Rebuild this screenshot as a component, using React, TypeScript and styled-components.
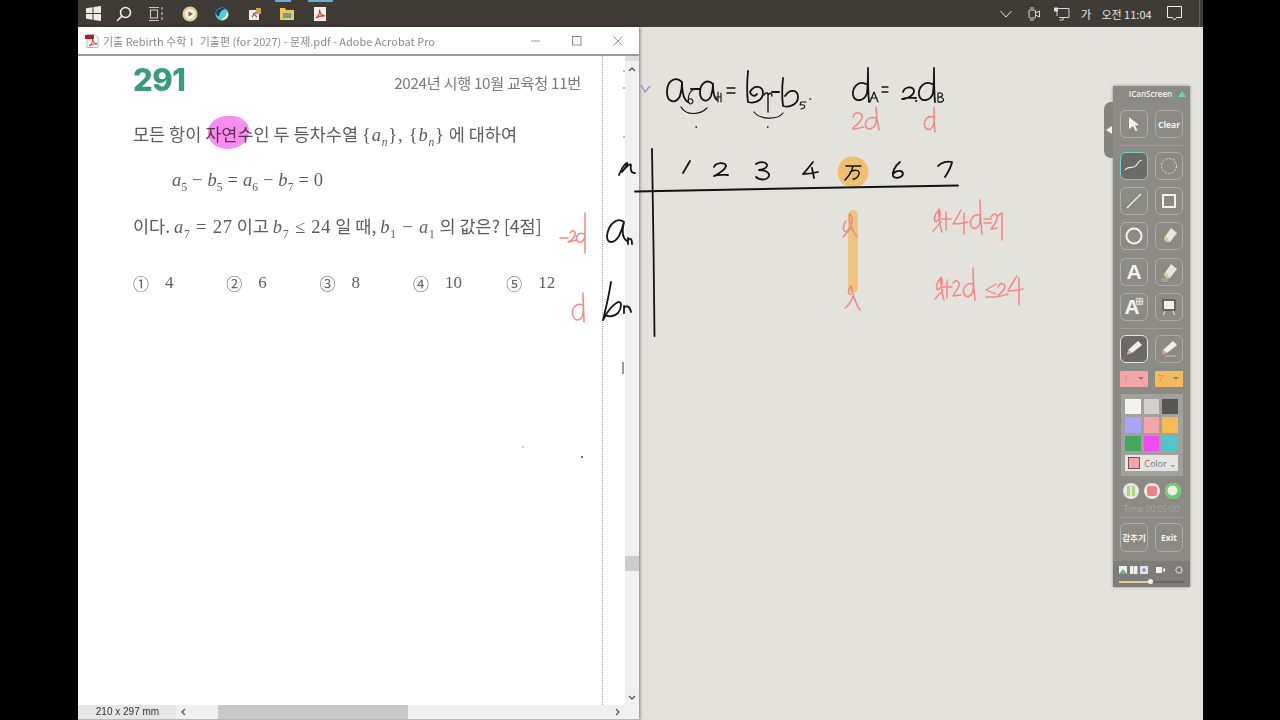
import React from 'react';
import styled, { createGlobalStyle } from 'styled-components';

const Global = createGlobalStyle`
  html, body { margin: 0; padding: 0; background: #000; overflow: hidden; }
  #root { width: 1280px; height: 720px; }
  * { box-sizing: border-box; }
`;

const KR = `"Noto Sans CJK KR", "Noto Sans", sans-serif`;
const SERIF = `"Liberation Serif", "Noto Sans CJK KR", serif`;

const Screen = styled.div`
  position: relative;
  width: 1280px;
  height: 720px;
  background: #000;
  padding: 0 77px 0 78px;
  overflow: hidden;
`;
const Desktop = styled.div`
  position: relative;
  width: 1125px;
  height: 720px;
  display: flex;
  flex-direction: column;
  background: #e4e2dd;
`;
const Taskbar = styled.header`
  position: relative;
  height: 27px;
  flex: none;
  background: #3f3c38;
  display: flex;
  align-items: center;
  color: #e8e6e2;
`;
const TaskSlot = styled.span<{ $w: number; $l?: number; $r?: number }>`
  position: relative;
  width: ${p => p.$w}px;
  height: 27px;
  flex: none;
  display: flex;
  align-items: center;
  justify-content: center;
  ${p => p.$l !== undefined && `&::before { content: ''; position: absolute; top: 0; left: ${p.$l}px; right: ${p.$r}px; height: 2px; background: #6fa9d8; }`}
`;
const TaskSpacer = styled.span`
  flex: 1;
`;
const TrayEdge = styled.span`
  width: 4px;
  height: 27px;
  margin-left: 8px;
  flex: none;
  border-left: 1px solid #625f5b;
`;
const Clock = styled.span`
  font: 11px ${KR};
  color: #e4e2de;
  width: 61px;
  flex: none;
  text-align: center;
  white-space: nowrap;
`;
const ImeLabel = styled.span`
  font: 11.5px ${KR};
  color: #e4e2de;
  width: 20px;
  flex: none;
  text-align: center;
`;
const Body = styled.div`
  flex: 1;
  display: flex;
  min-height: 0;
`;
const Window = styled.section`
  width: 561px;
  flex: none;
  display: flex;
  flex-direction: column;
  background: #fff;
  box-shadow: 1px 0 3px rgba(0, 0, 0, 0.45);
  z-index: 1;
`;
const TitleBar = styled.div`
  height: 29px;
  flex: none;
  display: flex;
  align-items: center;
  padding: 0 1px 0 7px;
  background: #fff;
  border-bottom: 2px solid #9b9b9b;
`;
const TitleText = styled.span`
  flex: 1;
  margin-left: 4px;
  font: 11px ${KR};
  color: #8a8a8a;
  white-space: nowrap;
`;
const WinControl = styled.span`
  width: 41px;
  height: 25px;
  flex: none;
  display: flex;
  align-items: center;
  justify-content: center;
`;
const ViewRow = styled.div`
  flex: 1;
  min-height: 0;
  display: flex;
`;
const PageArea = styled.main`
  width: 547px;
  flex: none;
  position: relative;
  padding: 8px 0 0 55px;
  background: #fff;
`;
const PageEdge = styled.span`
  position: absolute;
  top: 0;
  bottom: 0;
  left: 524px;
  border-left: 1px dotted #aaa;
`;
const ProblemHeader = styled.div`
  width: 448px;
  display: flex;
  justify-content: space-between;
  align-items: center;
  height: 30px;
`;
const ProblemNo = styled.div`
  font: 800 31px Inter, sans-serif;
  color: #3a9a7e;
  letter-spacing: -0.5px;
`;
const ProblemSource = styled.div`
  font: 15.2px ${KR};
  color: #7a7a7a;
  letter-spacing: -0.3px;
  margin-top: 6px;
`;
const Line = styled.p<{ $top: number; $indent?: number }>`
  margin: ${p => p.$top}px 0 0 ${p => p.$indent ?? 0}px;
  height: 24px;
  font: 17.5px/24px ${KR};
  color: #5c5c5c;
  white-space: nowrap;
`;
const Highlight = styled.span`
  position: relative;
  &::before {
    content: '';
    position: absolute;
    left: 3px;
    top: -5px;
    width: 41px;
    height: 33px;
    border-radius: 50% 45% 55% 50%;
    background: #fa8cf0;
    mix-blend-mode: multiply;
  }
`;
const M = styled.span<{ $tight?: boolean }>`
  font: 18.5px ${SERIF};
  color: #5c5c5c;
  letter-spacing: ${p => (p.$tight ? 0.15 : 0.8)}px;
  i { font-style: italic; }
  sub { font-size: 11.5px; line-height: 0; vertical-align: -5px; }
`;
const Choices = styled.ol`
  list-style: none;
  margin: 33px 0 0;
  padding: 0;
  display: flex;
`;
const Choice = styled.li`
  width: 93.3px;
  display: flex;
  align-items: center;
  gap: 16px;
  font: 17px/24px ${SERIF};
  color: #606060;
`;
const Circled = styled.span`
  font: 16px/24px ${KR};
`;
const Speck = styled.span<{ $x: number; $y: number; $h?: number; $c?: string }>`
  position: absolute;
  left: ${p => p.$x}px;
  top: ${p => p.$y}px;
  width: 2px;
  height: ${p => p.$h ?? 2}px;
  background: ${p => p.$c ?? '#777'};
`;
const VScroll = styled.div`
  width: 14px;
  flex: none;
  display: flex;
  flex-direction: column;
  align-items: center;
  background: #f0f0f0;
`;
const ScrollCap = styled.span`
  height: 5px;
  width: 100%;
  flex: none;
  background: #dedede;
`;
const ScrollArrow = styled.span`
  height: 17px;
  flex: none;
  display: flex;
  align-items: center;
  justify-content: center;
`;
const VTrack = styled.span`
  flex: 1;
  width: 100%;
  padding-top: 478px;
`;
const VThumb = styled.span`
  display: block;
  width: 100%;
  height: 15px;
  background: #cdcdcd;
`;
const StatusBar = styled.footer`
  height: 15px;
  flex: none;
  display: flex;
  align-items: center;
  background: #f0f0f0;
  border-bottom: 1px solid #b9b9b9;
  padding-right: 14px;
`;
const PageSize = styled.span`
  width: 98px;
  height: 100%;
  background: #e6e6e6;
  font: 10px/14px "Liberation Sans", sans-serif;
  color: #333;
  text-align: center;
  padding-left: 1px;
`;
const HTrack = styled.span`
  flex: 1;
  height: 100%;
  display: flex;
  align-items: center;
`;
const HArrow = styled.span`
  width: 16px;
  height: 100%;
  flex: none;
  display: flex;
  align-items: center;
  justify-content: center;
`;
const HThumb = styled.span`
  margin-left: 26px;
  width: 190px;
  height: 100%;
  background: #c8c8c8;
`;
const HFill = styled.span`
  flex: 1;
`;
const Canvas = styled.div`
  flex: 1;
  background: #e4e2dd;
`;
const Ink = styled.svg`
  position: absolute;
  left: -78px;
  top: 0;
  width: 1280px;
  height: 720px;
  pointer-events: none;
  z-index: 2;
`;

const Panel = styled.aside`
  position: absolute;
  left: 1035px;
  top: 86px;
  width: 77px;
  height: 501px;
  background: #8c8a85;
  box-shadow: 0 0 3px rgba(0, 0, 0, 0.35);
  display: flex;
  flex-direction: column;
  align-items: center;
  z-index: 3;
`;
const PanelTab = styled.span`
  position: absolute;
  left: -9px;
  top: 16px;
  width: 9px;
  height: 56px;
  background: #84827d;
  border-radius: 7px 0 0 7px;
  display: flex;
  align-items: center;
  justify-content: center;
  &::before {
    content: '';
    border-style: solid;
    border-width: 4px 6px 4px 0;
    border-color: transparent #f2f2ee transparent transparent;
  }
`;
const PanelTitle = styled.div`
  position: relative;
  width: 100%;
  height: 18px;
  flex: none;
  font: 600 8px/16px "Open Sans", sans-serif;
  color: #f3f2ee;
  text-align: center;
  padding-right: 2px;
  &::after {
    content: '';
    position: absolute;
    right: 4px;
    top: 5px;
    border-style: solid;
    border-width: 0 4px 6px 4px;
    border-color: transparent transparent #69d4c4 transparent;
  }
`;
const ToolGrid = styled.div<{ $top?: number }>`
  margin-top: ${p => p.$top ?? 0}px;
  display: grid;
  grid-template-columns: 28px 28px;
  gap: 7.2px 7px;
  flex: none;
`;
const Tool = styled.button<{ $state?: 'teal' | 'white'; $tall?: boolean }>`
  width: 28px;
  height: ${p => (p.$tall ? 29 : 28)}px;
  padding: 0;
  border-radius: 6px;
  display: flex;
  align-items: center;
  justify-content: center;
  background: ${p => (p.$state ? '#6c6a66' : 'transparent')};
  border: 1px solid ${p => (p.$state === 'teal' ? '#6fd0c6' : p.$state === 'white' ? '#e4e3df' : '#aeaca7')};
  color: #f4f3ef;
  font: 700 8.5px "Open Sans", ${KR}, sans-serif;
  white-space: nowrap;
`;
const LetterA = styled.span`
  font: 700 21px/1 "Liberation Sans", sans-serif;
  color: #f4f3ef;
`;
const Divider = styled.hr<{ $top: number; $bottom: number }>`
  width: 63px;
  margin: ${p => p.$top}px 0 ${p => p.$bottom}px;
  border: 0;
  border-top: 1px solid #9f9d98;
  flex: none;
`;
const SizeRow = styled.div`
  margin-top: 8px;
  display: flex;
  gap: 7px;
  flex: none;
`;
const SizePick = styled.span<{ $bg: string }>`
  width: 28px;
  height: 16px;
  background: ${p => p.$bg};
  border-radius: 1px;
  font: 9px/16px "Open Sans", sans-serif;
  color: #b59a7e;
  padding-left: 3px;
  position: relative;
  &::after {
    content: '';
    position: absolute;
    right: 4px;
    top: 6px;
    border-style: solid;
    border-width: 3px 3px 0 3px;
    border-color: #8d7f78 transparent transparent transparent;
  }
`;
const Palette = styled.div`
  margin-top: 7px;
  width: 62px;
  height: 82px;
  background: #a3a19c;
  padding: 5px 0 0;
  display: grid;
  grid-template-columns: repeat(3, 15.5px);
  grid-auto-rows: 15.5px;
  gap: 3px;
  justify-content: center;
  flex: none;
`;
const Swatch = styled.span<{ $c: string }>`
  background: ${p => p.$c};
`;
const ColorPick = styled.span`
  grid-column: 1 / 4;
  height: 16px;
  background: #e6e5e1;
  display: flex;
  align-items: center;
  gap: 4px;
  padding-left: 3px;
  font: 9px "Open Sans", sans-serif;
  color: #777;
  margin-top: 1px;
`;
const ColorChip = styled.span`
  width: 12px;
  height: 12px;
  flex: none;
  background: #f3a3a9;
  border: 1px solid #6b5b5b;
`;
const RecRow = styled.div`
  margin-top: 7px;
  display: flex;
  gap: 5px;
  align-items: center;
  flex: none;
`;
const RecBtn = styled.span`
  width: 16px;
  height: 16px;
  border-radius: 50%;
  background: #e9e8e3;
  display: flex;
  align-items: center;
  justify-content: center;
  svg { display: block; }
`;
const TimeText = styled.div`
  margin-top: 3px;
  font: 8.5px/14px "Open Sans", sans-serif;
  color: #a9a7a2;
  flex: none;
`;
const PanelFooter = styled.div`
  margin-top: auto;
  width: 100%;
  height: 26px;
  background: #7f7d79;
  padding: 4px 6px 0;
  display: flex;
  flex-direction: column;
  gap: 3px;
`;
const FooterIcons = styled.div`
  display: flex;
  align-items: center;
  height: 10px;
`;
const Slider = styled.div`
  position: relative;
  height: 2px;
  margin: 3px 0 0;
  background: linear-gradient(to right, #e5cf8f 0 31px, #696763 31px);
  &::after {
    content: '';
    position: absolute;
    left: 29px;
    top: -2px;
    width: 5px;
    height: 5px;
    border-radius: 50%;
    background: #f4f3ef;
  }
`;

const black = { fill: 'none', stroke: '#141414', strokeLinecap: 'round', strokeLinejoin: 'round', strokeWidth: 1.8 } as const;
const red = { fill: 'none', stroke: '#ef8a86', strokeLinecap: 'round', strokeLinejoin: 'round', strokeWidth: 1.5 } as const;

function Annotations() {
  return (
    <Ink viewBox="0 0 1280 720" aria-hidden="true">
      <circle cx="853" cy="172" r="15.5" fill="#efbf72" />
      <path d="M853 215 L853 288" stroke="#efc47c" strokeWidth="10" strokeLinecap="round" fill="none" />
      <path d="M641 85 L645 92 L650 86" stroke="#9087d8" strokeWidth="1.2" fill="none" />
      <g {...black}>
        <path d="M682 82 C676 76 667 80 667 92 C667 103 676 104 680 96 C682 90 682 84 682 82 C682 92 684 100 688 102" />
        <path d="M693 90 C688 92 687 102 690 104 C694 104 694 98 689 99" strokeWidth="1.2" />
        <path d="M691 89 H700" />
        <path d="M713 84 C707 78 700 84 700 92 C700 102 708 103 711 96 C713 90 713 86 713 84 C713 92 714 98 717 100" />
        <path d="M718 92 V102 M716 97 H721 M721 93 V102" strokeWidth="1.1" />
        <path d="M727 88 H735 M727 93 H735" strokeWidth="1.3" />
        <path d="M748 71 C747 82 747 95 748 102 C755 104 763 100 763 93 C763 86 754 84 750 92 C751 96 755 97 757 94" />
        <path d="M764 95 C766 92 768 92 768 95 V112 M768 95 C770 92 772 93 772 96" strokeWidth="1.4" />
        <path d="M772 92 H779" />
        <path d="M783 78 C782 88 782 98 783 106 C790 108 798 104 798 97 C798 90 790 88 785 96" />
        <path d="M806 102 H801 L800 105 C804 104 806 106 804 108 L801 109" strokeWidth="1.1" />
        <path d="M681 107 C686 116 700 115 707 108 M754 112 C760 120 778 120 783 113" strokeWidth="1.2" />
        <path d="M696 127 h.5 M767.5 127 h.5 M810 99 h.5" strokeWidth="1.4" />
        <path d="M866 84 C858 80 852 88 853 95 C855 103 865 101 867 93 C868 84 868 76 868 68 C868 80 868 92 869 102" />
        <path d="M870 102 L874 92 L878 102 M871 98 H877" strokeWidth="1.2" />
        <path d="M882 87 H888 M882 92 H888" strokeWidth="1.3" />
        <path d="M903 92 C905 86 914 86 914 91 C914 96 904 100 902 99 C906 97 912 98 916 98 M916 101 h.5" />
        <path d="M932 84 C924 80 918 88 919 95 C921 103 931 101 933 93 C934 84 934 76 934 68 C934 80 934 92 935 102" />
        <path d="M938 93 V102 M938 93 C944 92 944 97 938 97 C946 97 945 103 938 102" strokeWidth="1.2" />
        <path d="M652 149 C653 200 654 280 654.500 336" />
        <path d="M635 191.500 C720 190 860 187 958 185.500" strokeWidth="1.9" />
        <path d="M619 175 C621 170 624 164 627 163 C629 163 622 172 622 172 C626 167 630 163 631 165 C630 170 631 173 635 173" />
        <path d="M690 161 L683 173" />
        <path d="M714 167 C716 162 726 162 726 166 C725 170 718 174 714 176 C718 174 724 175 728 175" />
        <path d="M756 164 C760 161 768 162 767 166 C766 169 761 170 759 170 C764 170 770 172 769 176 C767 181 759 180 756 177" />
        <path d="M813 162 C809 167 806 171 803 174 C808 174 814 173 818 172 M812 168 L814 178" />
        <path d="M846 166 H861 M853 166 C852 171 850 175 845 180 M850 172 C855 169 860 170 859 174 C858 177 856 179 853 179" strokeWidth="1.4" />
        <path d="M900 162 C895 166 892 172 893 176 C895 179 902 178 903 174 C903 170 897 170 894 173" />
        <path d="M938 166 C941 162 948 161 952 162 C951 168 948 172 945 177" />
        <path d="M624 222 C616 216 608 226 607 236 C607 244 614 244 619 236 C622 230 623 226 624 222 C622 230 622 238 627 241 M628 238 V244 M628 240 C630 238 632 238 632 244" />
        <path d="M611 282 C609 295 606 308 603 320 C607 312 612 305 618 302 C622 301 622 308 618 313 C614 317 608 317 606 315 M624 306 V313 M624 308 C626 305 630 306 631 312" />
      </g>
      <g {...red}>
        <path d="M853 117 C855 110 864 113 862 118 C860 124 852 127 853 129 C855 130 861 127 864 127" />
        <path d="M875 118 C868 116 864 122 866 127 C869 131 875 128 876 122 C877 117 877 112 876 107 C876 115 877 122 879 130" />
        <path d="M934 117 C926 115 923 122 925 127 C928 132 933 129 934 122 C935 117 934 112 934 107 C934 115 934 124 935 132" />
        <path d="M560 238 H568" />
        <path d="M570 233 C572 229 576 231 575 235 C574 239 570 241 568 242 C571 242 574 240 577 240" />
        <path d="M584 234 C578 231 575 238 577 241 C580 244 584 242 585 236 M585 213 V253" />
        <path d="M583 305 C575 302 571 310 573 316 C576 323 583 320 583 312 C584 306 583 299 583 293 C583 303 584 314 584 322" />
        <path d="M846 221 C842 226 843 234 847 231 C852 226 854 218 850 214 C848 217 850 228 857 237 M843 237 C847 233 848 231 851 229" />
        <path d="M851 286 C847 291 848 295 851 294 M851 286 C853 296 856 304 860 310 M853 296 C851 302 848 306 845 308" />
        <path d="M938 211 C933 216 934 224 937 221 C941 217 941 212 939 209 C938 214 940 226 942 232 M933 231 C936 228 939 224 941 222" />
        <path d="M940 219 H951 M946 212 V230" />
        <path d="M961 210 C958 216 955 221 953 224 C958 224 964 223 968 222 M964 213 V234" />
        <path d="M980 215 C973 213 969 221 971 226 C974 231 980 228 980 220 C981 214 980 208 980 200 C980 212 981 224 982 234" />
        <path d="M984 219 H991 M984 223 H991" />
        <path d="M991 217 C994 212 998 214 997 219 C996 224 992 227 991 229 C993 229 995 228 997 228" />
        <path d="M998 216 C1000 214 1002 213 1002 213 V240" />
        <path d="M940 279 C935 284 936 292 939 289 C943 285 943 280 941 277 C940 282 942 294 944 300 M935 299 C938 296 941 292 943 290" />
        <path d="M942 287 H952 M947 280 V298" />
        <path d="M953 283 C956 279 960 281 959 286 C957 291 953 294 953 296 C956 296 958 295 961 295" />
        <path d="M973 284 C966 282 962 289 964 294 C967 299 973 296 973 289 C974 283 973 276 973 268 C973 280 974 290 975 300" />
        <path d="M996 284 L986 290 L996 294 M986 297 H997" strokeWidth="1.3" />
        <path d="M998 287 C1000 282 1005 283 1005 287 C1004 291 998 295 998 296 C1001 297 1004 295 1008 294" />
        <path d="M1017 276 C1013 282 1010 287 1008 291 C1013 291 1018 290 1023 289 M1019 278 V305" />
      </g>
    </Ink>
  );
}

const WinLogo = () => (
  <svg width="15" height="15" viewBox="0 0 15 15" fill="#ecebe7"><path d="M0 2.200 L6.500 1.200 V7 H0Z M7.500 1 L15 0 V7 H7.500Z M0 8 H6.500 V13.800 L0 12.800Z M7.500 8 H15 V15 L7.500 14Z" /></svg>
);
const SearchIcon = () => (
  <svg width="16" height="16" viewBox="0 0 16 16" fill="none" stroke="#f0efeb" strokeWidth="1.6"><circle cx="9.500" cy="6.500" r="5" /><path d="M6 10 L1 15" /></svg>
);
const TaskView = () => (
  <svg width="16" height="16" viewBox="0 0 16 16" fill="none" stroke="#c9c7c3" strokeWidth="1.100"><path d="M1 1.500 H11 M1 14.500 H11" /><rect x="2.500" y="4" width="7" height="8" /><path d="M14 1 V4 M14 6 V9 M14 11 V14" /></svg>
);
const MediaIcon = () => (
  <svg width="16" height="16" viewBox="0 0 16 16"><circle cx="8" cy="8" r="7.500" fill="#d9d49a" /><circle cx="8" cy="8" r="5" fill="#f4f2e0" /><path d="M6.500 5.500 L11 8 L6.500 10.500Z" fill="#a04a5a" /></svg>
);
const TealIcon = () => (
  <svg width="14" height="14" viewBox="0 0 14 14"><circle cx="7" cy="7" r="6.500" fill="#62c4d0" /><path d="M1 5 C3 1 8 0 11 2 C8 2 5 4 4 9 C3 10 1 8 1 5Z" fill="#1f3d63" /><path d="M6 13 C10 11 12 8 12 4 L13.500 8 C13 11 9 14 6 13Z" fill="#eef6f6" /></svg>
);
const LockPdfIcon = () => (
  <svg width="14" height="14" viewBox="0 0 14 14"><rect x="1" y="3" width="10" height="10" fill="#f0eeea" /><path d="M4 10 L8 5 M5 6 L9 10" stroke="#b5403c" strokeWidth="1.200" /><rect x="8" y="1" width="5" height="6" fill="#c9a15e" /></svg>
);
const FolderIcon = () => (
  <svg width="14" height="14" viewBox="0 0 14 14"><path d="M0 1 H5 L6 3 H14 V13 H0Z" fill="#eec65c" /><rect x="3" y="6" width="8" height="5" fill="#5d9fb3" /></svg>
);
const PdfTaskIcon = () => (
  <svg width="14" height="14" viewBox="0 0 14 14"><rect x="1" y="0" width="12" height="14" fill="#f2efe9" /><path d="M3 11 C6 9 7 5 6.500 2.500 C6.500 6 9 9 12 9 C8 8.500 5 9.500 3 11Z" fill="none" stroke="#c2362f" strokeWidth="1.100" /></svg>
);
const Chevron = () => (
  <svg width="12" height="8" viewBox="0 0 12 8" fill="none" stroke="#e4e2de" strokeWidth="1"><path d="M.5 1 L6 7 L11.500 1" /></svg>
);
const MeetIcon = () => (
  <svg width="12" height="14" viewBox="0 0 12 14" fill="none" stroke="#d8d6d2" strokeWidth="1"><path d="M2 1 H6 M2 13 H6" /><rect x="1" y="3" width="6.500" height="8" rx="1" /><path d="M7.500 6 L11.500 4 V10 L7.500 8" /></svg>
);
const MonitorIcon = () => (
  <svg width="16" height="14" viewBox="0 0 16 14" fill="none" stroke="#d8d6d2" strokeWidth="1"><path d="M3 1.500 H15 V10.500 H5 M9 10.500 V13 H5.500" /><rect x=".5" y="1" width="3" height="3" fill="#e8e6e2" /><path d="M3 4 V9" /></svg>
);
const NotifyIcon = () => (
  <svg width="15" height="15" viewBox="0 0 15 15" fill="none" stroke="#ecebe7" strokeWidth="1"><path d="M.5 .5 H14.500 V11.500 H9.500 L7.500 14 L5.500 11.500 H.5Z" /></svg>
);
const PdfTitleIcon = () => (
  <svg width="14" height="14" viewBox="0 0 14 14"><path d="M2 .5 H9.500 L13 3.500 V13.500 H2Z" fill="#fff" stroke="#999" strokeWidth=".7" /><rect x="0" y="1" width="9" height="4" fill="#b31d1d" /><path d="M4 12 C7 10 8 7 7.500 5 C8 8 10 10 12 10 C9 9.500 6 10.500 4 12Z" fill="none" stroke="#c8312b" strokeWidth="1" /></svg>
);
const MinIcon = () => <svg width="10" height="10" viewBox="0 0 10 10"><path d="M0 5 H9" stroke="#999" strokeWidth="1" /></svg>;
const MaxIcon = () => <svg width="10" height="10" viewBox="0 0 10 10"><rect x=".5" y=".5" width="8.500" height="8.500" fill="none" stroke="#888" /></svg>;
const CloseIcon = () => <svg width="10" height="10" viewBox="0 0 10 10"><path d="M.5 .5 L9.500 9.500 M9.500 .5 L.5 9.500" stroke="#888" strokeWidth=".9" /></svg>;
const Caret = ({ dir }: { dir: 'up' | 'down' | 'left' | 'right' }) => {
  const d = { up: 'M1 5 L4 2 L7 5', down: 'M1 3 L4 6 L7 3', left: 'M5 1 L2 4 L5 7', right: 'M3 1 L6 4 L3 7' }[dir];
  return <svg width="8" height="8" viewBox="0 0 8 8" fill="none" stroke="#555" strokeWidth="1.300"><path d={d} /></svg>;
};
const EraserGlyph = ({ ground }: { ground?: boolean }) => (
  <svg width="20" height="20" viewBox="0 0 20 20">
    <path d="M12 2 L18 7 L11 16 C8 17 5 14 5 12Z" fill="#e9e8e2" />
    <path d="M5 12 C5 14 8 17 11 16 L9 13 L7 10Z" fill="#c7d28e" />
    {ground && <path d="M2 17 H9 M2 19 H9" stroke="#b9b7b0" strokeWidth="1" />}
  </svg>
);
const PenGlyph = ({ grey }: { grey?: boolean }) => (
  <svg width="20" height="20" viewBox="0 0 20 20">
    <path d="M14 2 L18 6 L8 14 L4 11Z" fill="#f0efea" />
    <path d="M4 11 L8 14 L3 16Z" fill="#e9a197" />
    {grey && <path d="M6 17 H17" stroke="#a9a7a2" strokeWidth="2" />}
  </svg>
);

export default function App() {
  return (
    <Screen>
      <Global />
      <Desktop>
        <Taskbar>
          <TaskSlot $w={30}><WinLogo /></TaskSlot>
          <TaskSlot $w={32}><SearchIcon /></TaskSlot>
          <TaskSlot $w={32}><TaskView /></TaskSlot>
          <TaskSlot $w={36}><MediaIcon /></TaskSlot>
          <TaskSlot $w={28}><TealIcon /></TaskSlot>
          <TaskSlot $w={38}><LockPdfIcon /></TaskSlot>
          <TaskSlot $w={26} $l={1} $r={9}><FolderIcon /></TaskSlot>
          <TaskSlot $w={40} $l={8} $r={7}><PdfTaskIcon /></TaskSlot>
          <TaskSpacer />
          <TaskSlot $w={28}><Chevron /></TaskSlot>
          <TaskSlot $w={28}><MeetIcon /></TaskSlot>
          <TaskSlot $w={28}><MonitorIcon /></TaskSlot>
          <ImeLabel>가</ImeLabel>
          <Clock>오전 11:04</Clock>
          <TaskSlot $w={34}><NotifyIcon /></TaskSlot>
          <TrayEdge />
        </Taskbar>
        <Body>
          <Window>
            <TitleBar>
              <PdfTitleIcon />
              <TitleText>기출 Rebirth 수학Ⅰ 기출편 (for 2027) - 문제.pdf - Adobe Acrobat Pro</TitleText>
              <WinControl><MinIcon /></WinControl>
              <WinControl><MaxIcon /></WinControl>
              <WinControl><CloseIcon /></WinControl>
            </TitleBar>
            <ViewRow>
              <PageArea>
                <PageEdge />
                <ProblemHeader>
                  <ProblemNo>291</ProblemNo>
                  <ProblemSource>2024년 시행 10월 교육청 11번</ProblemSource>
                </ProblemHeader>
                <Line $top={28}>
                  모든 항이 <Highlight>자연수</Highlight>인 두 등차수열 <M>{'{'}<i>a</i><sub><i>n</i></sub>{'}'}, {'{'}<i>b</i><sub><i>n</i></sub>{'}'}</M> 에 대하여
                </Line>
                <Line $top={21} $indent={39}>
                  <M $tight><i>a</i><sub>5</sub> − <i>b</i><sub>5</sub> = <i>a</i><sub>6</sub> − <i>b</i><sub>7</sub> = 0</M>
                </Line>
                <Line $top={23}>
                  이다. <M><i>a</i><sub>7</sub> = 27</M> 이고 <M><i>b</i><sub>7</sub> ≤ 24</M> 일 때, <M><i>b</i><sub>1</sub> − <i>a</i><sub>1</sub></M> 의 값은? [4점]
                </Line>
                <Choices>
                  <Choice><Circled>①</Circled>4</Choice>
                  <Choice><Circled>②</Circled>6</Choice>
                  <Choice><Circled>③</Circled>8</Choice>
                  <Choice><Circled>④</Circled>10</Choice>
                  <Choice><Circled>⑤</Circled>12</Choice>
                </Choices>
                <Speck $x={503} $y={400} />
                <Speck $x={444} $y={390} $c="#ccc" />
                <Speck $x={545} $y={14} $c="#bbb" />
                <Speck $x={545} $y={31} $c="#9fc9b4" />
                <Speck $x={545} $y={80} $c="#bbb" />
                <Speck $x={544} $y={306} $h={12} $c="#999" />
              </PageArea>
              <VScroll>
                <ScrollCap />
                <ScrollArrow><Caret dir="up" /></ScrollArrow>
                <VTrack><VThumb /></VTrack>
                <ScrollArrow><Caret dir="down" /></ScrollArrow>
              </VScroll>
            </ViewRow>
            <StatusBar>
              <PageSize>210 x 297 mm</PageSize>
              <HTrack>
                <HArrow><Caret dir="left" /></HArrow>
                <HThumb />
                <HFill />
                <HArrow><Caret dir="right" /></HArrow>
              </HTrack>
            </StatusBar>
          </Window>
          <Canvas />
        </Body>
        <Annotations />
        <Panel>
          <PanelTab />
          <PanelTitle>ICanScreen</PanelTitle>
          <ToolGrid $top={6}>
            <Tool aria-label="Select"><svg width="14" height="16" viewBox="0 0 14 16"><path d="M2 1 L12 9 L8 9.500 L10.500 14.500 L8.500 15 L6 10 L2 13Z" fill="#f4f3ef" /></svg></Tool>
            <Tool>Clear</Tool>
          </ToolGrid>
          <Divider $top={7} $bottom={6} />
          <ToolGrid>
            <Tool $state="teal" aria-label="Curve"><svg width="20" height="16" viewBox="0 0 20 16" fill="none" stroke="#f0efea" strokeWidth="1.200"><path d="M1 12 C4 8 7 10 10 9 C14 8 13 3 18 2" /></svg></Tool>
            <Tool aria-label="Lasso"><svg width="18" height="18" viewBox="0 0 18 18" fill="none" stroke="#e4e3de" strokeWidth="1" strokeDasharray="2 1.500"><circle cx="9" cy="9" r="7.500" /></svg></Tool>
            <Tool aria-label="Line"><svg width="16" height="16" viewBox="0 0 16 16" stroke="#f0efea" strokeWidth="1.300"><path d="M1 15 L15 1" /></svg></Tool>
            <Tool aria-label="Rectangle"><svg width="16" height="16" viewBox="0 0 16 16" fill="none" stroke="#f4f3ef" strokeWidth="2"><rect x="2" y="2" width="12" height="12" /></svg></Tool>
            <Tool aria-label="Circle"><svg width="18" height="18" viewBox="0 0 18 18" fill="none" stroke="#f4f3ef" strokeWidth="2"><circle cx="9" cy="9" r="7.500" /></svg></Tool>
            <Tool aria-label="Eraser"><EraserGlyph /></Tool>
            <Tool><LetterA>A</LetterA></Tool>
            <Tool aria-label="Text eraser"><EraserGlyph ground /></Tool>
            <Tool>
              <LetterA>A</LetterA>
              <svg width="9" height="9" viewBox="0 0 9 9" style={{ marginLeft: -5, marginTop: -11 }} fill="#f0efea" stroke="#8c8a85" strokeWidth=".7"><rect x=".5" y=".5" width="8" height="8" rx="2" /><path d="M.5 3 H8.500 M.5 6 H8.500 M3 .5 V8.500 M6 .5 V8.500" /></svg>
            </Tool>
            <Tool aria-label="Board"><svg width="16" height="18" viewBox="0 0 16 18"><rect x="1" y="1" width="14" height="12" rx="1.500" fill="#67655f" /><rect x="3" y="3" width="10" height="8" fill="#f0efea" /><path d="M4 13 L2.500 17 M12 13 L13.500 17" stroke="#f0efea" strokeWidth="1" /></svg></Tool>
          </ToolGrid>
          <Divider $top={7} $bottom={6} />
          <ToolGrid>
            <Tool $state="white" aria-label="Pen"><PenGlyph /></Tool>
            <Tool aria-label="Highlighter"><PenGlyph grey /></Tool>
          </ToolGrid>
          <SizeRow>
            <SizePick $bg="#f3a5a9">1</SizePick>
            <SizePick $bg="#f0bc5e">7</SizePick>
          </SizeRow>
          <Palette>
            {['#f4f3ef', '#cfcfcc', '#575654', '#a8a5f4', '#f5a5a9', '#f3bd56', '#46a75c', '#ee4cee', '#4fc7c9'].map(c => (
              <Swatch key={c} $c={c} />
            ))}
            <ColorPick><ColorChip />Color ⌄</ColorPick>
          </Palette>
          <RecRow>
            <RecBtn><svg width="10" height="10" viewBox="0 0 10 10" fill="#a9d580"><rect x="1" y="0" width="3" height="10" rx="1" /><rect x="6" y="0" width="3" height="10" rx="1" /></svg></RecBtn>
            <RecBtn><svg width="10" height="10" viewBox="0 0 10 10"><rect width="10" height="10" rx="2" fill="#ec8286" /></svg></RecBtn>
            <RecBtn><svg width="16" height="16" viewBox="0 0 16 16"><circle cx="8" cy="8" r="8" fill="#6fc96d" /><circle cx="7.500" cy="7.500" r="5" fill="#e9f1e2" /></svg></RecBtn>
          </RecRow>
          <TimeText>Time 00:05:00</TimeText>
          <Divider $top={1} $bottom={5} />
          <ToolGrid>
            <Tool $tall>감추기</Tool>
            <Tool $tall>Exit</Tool>
          </ToolGrid>
          <PanelFooter>
            <FooterIcons>
              <svg width="64" height="10" viewBox="0 0 64 10">
                <rect x="0" y="1" width="8" height="8" fill="#eef1ea" /><path d="M0 9 L4 4 L8 9Z" fill="#69b58a" />
                <rect x="11" y="1" width="3.500" height="8" fill="#f0efea" /><rect x="15" y="1" width="3.500" height="8" fill="#f0efea" />
                <rect x="21" y="1" width="8" height="8" fill="#dfe2f0" /><path d="M23 5 H27 M25 3 V7" stroke="#6a7ab0" strokeWidth="1" />
                <path d="M37 2 H43 V8 H37Z M44 4 L46 3 V7 L44 6Z" fill="#f0efea" />
                <circle cx="60" cy="5" r="3" fill="none" stroke="#e4e3de" strokeWidth="1.300" strokeDasharray="1.500 .6" />
              </svg>
            </FooterIcons>
            <Slider />
          </PanelFooter>
        </Panel>
      </Desktop>
    </Screen>
  );
}
